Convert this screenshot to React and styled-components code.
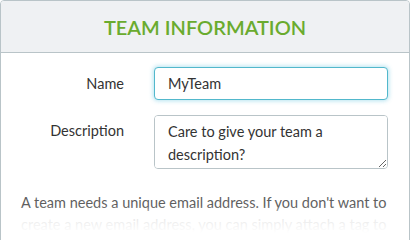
import React from "react";
import styled, { createGlobalStyle } from "styled-components";

const Global = createGlobalStyle`
  html, body { margin: 0; padding: 0; background: #fff; }
  body { font-family: Lato, "Open Sans", sans-serif; color: #333; }
  * { box-sizing: border-box; }
`;

const Card = styled.div`
  width: 410px;
  height: 250px;
  border: 1px solid #b9c4c8;
  border-radius: 4px;
  overflow: hidden;
  position: relative;
  background: #fff;
`;

const Header = styled.div`
  height: 52px;
  background: #eff1f3;
  border-bottom: 1px solid #b9c4c8;
  display: flex;
  align-items: center;
  justify-content: center;
`;

const Title = styled.h2`
  margin: 0;
  font-size: 20px;
  font-weight: 600;
  color: #6aab2e;
  letter-spacing: 0;
`;

const Body = styled.div`
  padding: 14px 20px 0 20px;
  display: flex;
  flex-direction: column;
  gap: 15px;
`;

const Row = styled.div`
  display: grid;
  grid-template-columns: 103px 234px;
  column-gap: 30px;
  align-items: ${p => (p.top ? "start" : "center")};
`;

const Label = styled.label`
  text-align: right;
  font-size: 14.5px;
  color: #333;
  padding-top: ${p => (p.top ? "7px" : "0")};
`;

const Input = styled.input`
  height: 33px;
  width: 100%;
  border: 1px solid #52b8cc;
  border-radius: 4px;
  padding: 0 13px;
  font-family: inherit;
  font-size: 14.5px;
  color: #333;
  outline: none;
  box-shadow: 0 0 4px 1px rgba(91, 192, 222, 0.45);
`;

const TextArea = styled.textarea`
  height: 54px;
  width: 100%;
  border: 1px solid #b9c4c8;
  border-radius: 4px;
  padding: 4px 13px;
  font-family: inherit;
  font-size: 14.5px;
  line-height: 23px;
  color: #333;
  resize: vertical;
  outline: none;
  &::placeholder { color: #333; opacity: 1; }
`;

const Note = styled.p`
  margin: 8px 0 0 0;
  font-size: 14.5px;
  line-height: 22px;
  color: #5f5f5f;
`;

const Fade = styled.div`
  position: absolute;
  left: 0;
  right: 0;
  top: 205px;
  height: 45px;
  background: linear-gradient(to bottom, rgba(255,255,255,0), rgba(255,255,255,0.85) 25%, #fff 60%);
`;

export default function App() {
  return (
    <>
      <Global />
      <Card>
        <Header>
          <Title>TEAM INFORMATION</Title>
        </Header>
        <Body>
          <Row>
            <Label>Name</Label>
            <Input defaultValue="MyTeam" />
          </Row>
          <Row top>
            <Label top>Description</Label>
            <TextArea placeholder="Care to give your team a description?" />
          </Row>
          <Note>
            A team needs a unique email address. If you don't want to create a new
            email address, you can simply attach a tag to your existing one.
          </Note>
        </Body>
        <Fade />
      </Card>
    </>
  );
}
